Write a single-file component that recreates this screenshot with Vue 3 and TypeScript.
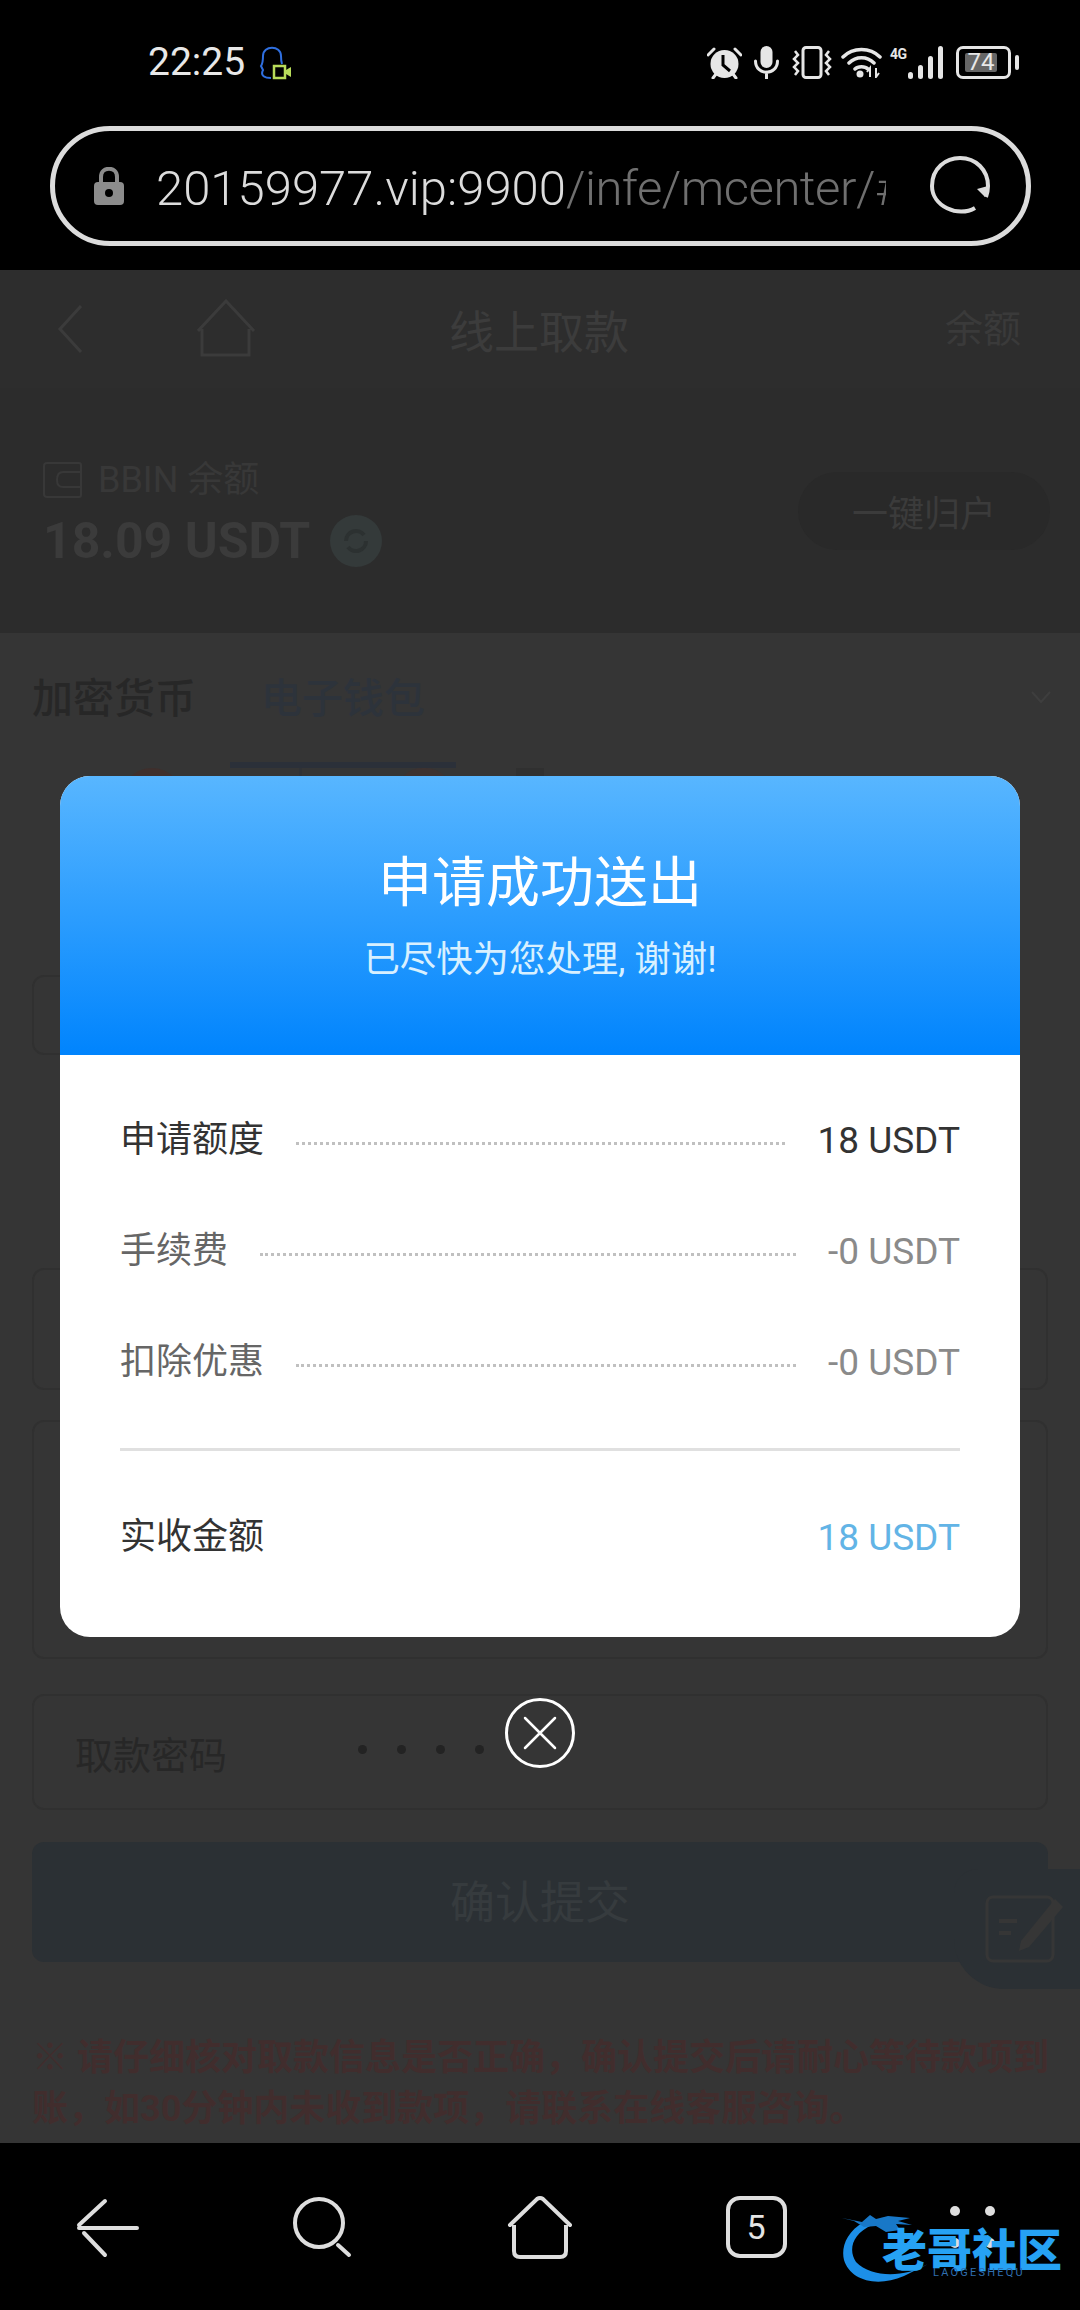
<script setup lang="ts">
interface Row {
  label: string
  value: string
  tone: string
}

const rows: Row[] = [
  { label: '申请额度', value: '18 USDT', tone: 'dark' },
  { label: '手续费', value: '-0 USDT', tone: 'grey' },
  { label: '扣除优惠', value: '-0 USDT', tone: 'grey' }
]
</script>

<template>
  <div class="phone">
    <header class="chrome">
      <div class="status">
        <span class="time">22:25</span>
        <svg class="qq" width="34" height="34" viewBox="0 0 34 34">
          <path d="M12 32 C6 32 1 30 4 24 L2 20 C4 17 4 13 4 10 C4 -1 22 -1 22 10 C22 13 22 15 23 18" fill="none" stroke="#2f6fe0" stroke-width="2" />
          <rect x="15" y="20" width="11" height="12" fill="none" stroke="#b8dc5a" stroke-width="2.500" />
          <path d="M27 24 L32 21 V31 L27 28 Z" fill="#b8dc5a" />
        </svg>
        <div class="status-icons">
          <svg class="ic" width="35" height="33" viewBox="0 0 35 33">
            <circle cx="17.500" cy="18" r="14" fill="#e6e6e6" />
            <path d="M16 9 V19 L23 25" fill="none" stroke="#000" stroke-width="3" />
            <path d="M1 9 L7 3 M34 9 L28 3 M6 32 L9 28 M29 32 L26 28" stroke="#e6e6e6" stroke-width="3" stroke-linecap="round" />
          </svg>
          <svg class="ic ic-mic" width="25" height="33" viewBox="0 0 25 33">
            <rect x="6.500" y="0" width="12" height="22" rx="6" fill="#e6e6e6" />
            <path d="M1.500 15 C1.500 30 23.500 30 23.500 15 M12.500 26 V33" fill="none" stroke="#e6e6e6" stroke-width="3" stroke-linecap="round" />
          </svg>
          <svg class="ic ic-vib" width="40" height="33" viewBox="0 0 40 33">
            <rect x="11" y="1.500" width="18" height="30" rx="3" fill="none" stroke="#e6e6e6" stroke-width="3" />
            <path d="M3 5 L6 9 L2 13 L6 17 L2 21 L6 25 L3 29 M37 5 L34 9 L38 13 L34 17 L38 21 L34 25 L37 29" fill="none" stroke="#e6e6e6" stroke-width="2.500" />
          </svg>
          <svg class="ic ic-wifi" width="41" height="31" viewBox="0 0 41 31">
            <path d="M2 10 C12 0 29 0 39 10 M8 16 C15 9 26 9 33 16 M14 22 C17 19 24 19 27 22" fill="none" stroke="#e6e6e6" stroke-width="3.500" stroke-linecap="round" />
            <circle cx="19" cy="27" r="3.500" fill="#e6e6e6" />
            <path d="M29 30 V21 L26 25 M35 21 V30 L38 26" fill="none" stroke="#e6e6e6" stroke-width="2" />
          </svg>
          <div class="signal ic-sig">
            <span class="net">4G</span>
            <svg width="35" height="33" viewBox="0 0 35 33">
              <rect x="0" y="26" width="5" height="7" rx="2.500" fill="#e6e6e6" />
              <rect x="10" y="19" width="5" height="14" rx="2.500" fill="#e6e6e6" />
              <rect x="20" y="10" width="5" height="23" rx="2.500" fill="#e6e6e6" />
              <rect x="30" y="0" width="5" height="33" rx="2.500" fill="#e6e6e6" />
            </svg>
          </div>
          <div class="battery ic-batt">
            <div class="battery-body"><span class="battery-level">74</span></div>
            <span class="battery-nub"></span>
          </div>
        </div>
      </div>
      <div class="address">
        <svg width="32" height="38" viewBox="0 0 32 38">
          <path d="M8 16 V10 C8 -1 24 -1 24 10 V16" fill="none" stroke="#8c8c8c" stroke-width="4" />
          <rect x="1" y="15" width="30" height="23" rx="4" fill="#8c8c8c" />
          <circle cx="16" cy="26" r="4" fill="#000" />
        </svg>
        <div class="url"><span class="host">20159977.vip:9900</span><span class="path">/infe/mcenter/#/withdraw</span></div>
        <svg class="reload" width="60" height="60" viewBox="0 0 60 60">
          <path d="M45 52 C28 62 2 50 2 30 C2 12 16 2 30 2 C46 2 58 14 58 30 C58 34 57 38 56 41" fill="none" stroke="#dcdcdc" stroke-width="4" />
          <path d="M47 33 L55 41 L58 30 Z" fill="#dcdcdc" />
        </svg>
      </div>
    </header>

    <main class="web">
      <div class="top-bar">
        <div class="top-left">
          <svg width="26" height="50" viewBox="0 0 26 50">
            <path d="M24 2 L3 25 L24 48" fill="none" stroke="#3b3b3b" stroke-width="3" />
          </svg>
          <svg class="top-home" width="60" height="60" viewBox="0 0 60 60">
            <path d="M1 32 L29 2 L57 32 M5 30 V56 H52 V30" fill="none" stroke="#3b3b3b" stroke-width="3" />
          </svg>
        </div>
        <div class="top-title">线上取款</div>
        <div class="top-right">余额</div>
      </div>

      <section class="balance">
        <div class="balance-info">
          <div class="balance-label">
            <svg width="40" height="36" viewBox="0 0 40 36">
              <path d="M38 9 V3 Q38 1 36 1 H4 Q1 1 1 4 V32 Q1 35 4 35 H36 Q38 35 38 33 V26 M38 10 H20 Q14 10 14 18 Q14 25 20 25 H38 Z" fill="none" stroke="#383838" stroke-width="2" />
            </svg>
            <span>BBIN 余额</span>
          </div>
          <div class="balance-amount">
            <span>18.09 USDT</span>
            <span class="coin">
              <svg width="30" height="30" viewBox="0 0 30 30">
                <path d="M5 15 A10 10 0 0 1 23 9 M25 15 A10 10 0 0 1 7 21" fill="none" stroke="#2c3131" stroke-width="4" />
              </svg>
            </span>
          </div>
        </div>
        <div class="collect">一键归户</div>
      </section>

      <section class="form">
        <div class="tabs">
          <div class="tab">加密货币</div>
          <div class="tab tab-active">电子钱包</div>
          <svg class="tab-more" width="22" height="14" viewBox="0 0 22 14">
            <path d="M2 2 L11 12 L20 2" fill="none" stroke="#3e3e3e" stroke-width="2" />
          </svg>
        </div>
        <div class="wallets">
          <span class="wallet wallet-a"></span>
          <span class="wallet wallet-b"></span>
          <span class="wallet wallet-c"></span>
          <span class="wallet wallet-d"></span>
        </div>
        <div class="field field-a"></div>
        <div class="field field-b"></div>
        <div class="field field-c"></div>
        <div class="field field-pass">
          <span class="field-label">取款密码</span>
          <span class="dots"><i></i><i></i><i></i><i></i></span>
        </div>
        <div class="submit">确认提交</div>
        <p class="note">※ 请仔细核对取款信息是否正确，确认提交后请耐心等待款项到账，如30分钟内未收到款项，请联系在线客服咨询。</p>
      </section>

      <div class="float-btn">
        <svg width="80" height="68" viewBox="0 0 80 68">
          <rect x="2" y="2" width="66" height="64" rx="6" fill="none" stroke="#363636" stroke-width="3" />
          <path d="M14 26 H32 M14 38 H26" stroke="#363636" stroke-width="4" />
          <path d="M70 4 L78 12 L44 52 L34 56 L36 46 Z" fill="#363636" />
        </svg>
      </div>

      <div class="overlay">
        <div class="dialog">
          <div class="dialog-head">
            <h1 class="dialog-title">申请成功送出</h1>
            <p class="dialog-sub">已尽快为您处理, 谢谢!</p>
          </div>
          <div class="dialog-body">
            <div v-for="row in rows" :key="row.label" class="row" :class="`row-${row.tone}`">
              <span class="row-label">{{ row.label }}</span>
              <span class="row-dots"></span>
              <span class="row-value">{{ row.value }}</span>
            </div>
            <div class="divider"></div>
            <div class="row row-total">
              <span class="row-label">实收金额</span>
              <span class="row-value">18 USDT</span>
            </div>
          </div>
        </div>
        <button class="close" type="button" aria-label="关闭">
          <svg width="36" height="36" viewBox="0 0 36 36">
            <path d="M3 3 L33 33 M33 3 L3 33" stroke="#fff" stroke-width="2.500" stroke-linecap="round" />
          </svg>
        </button>
      </div>
    </main>

    <nav class="nav">
      <div class="nav-cell">
        <svg width="80" height="80" viewBox="0 0 80 80">
          <path d="M11 41 H69 M11 38 L37 14 M16 46 L37 68" fill="none" stroke="#dedede" stroke-width="4" stroke-linecap="round" />
        </svg>
      </div>
      <div class="nav-cell">
        <svg width="80" height="80" viewBox="0 0 80 80">
          <circle cx="35" cy="36" r="24" fill="none" stroke="#dedede" stroke-width="4" />
          <path d="M54 58 L65 68" stroke="#dedede" stroke-width="4" stroke-linecap="round" />
        </svg>
      </div>
      <div class="nav-cell">
        <svg width="80" height="80" viewBox="0 0 80 80">
          <path d="M10 38 L37 12 Q40 10 43 12 L70 38" fill="none" stroke="#dedede" stroke-width="4" stroke-linecap="round" />
          <path d="M14 38 V64 Q14 70 20 70 H60 Q66 70 66 64 V38" fill="none" stroke="#dedede" stroke-width="4" />
        </svg>
      </div>
      <div class="nav-cell">
        <div class="tab-count">5</div>
      </div>
      <div class="nav-cell">
        <div class="more"><i></i><i></i><i></i><i></i></div>
      </div>
    </nav>

    <div class="watermark">
      <svg class="dragon" width="100" height="76" viewBox="0 0 100 76">
        <path d="M22 12 C4 22 -1 38 2 50 C8 70 34 78 62 66 L86 54 C62 68 30 68 14 52 C6 40 10 24 30 15 Z" fill="#1c8fe8" />
        <path d="M0 8 L20 12 L28 5 L34 9 L46 6 L68 8 L56 11 L70 15 L54 14 L58 20 L44 22 L34 16 L22 17 L12 11 Z" fill="#1878c8" />
      </svg>
      <div class="mark-name">老哥社区</div>
      <div class="mark-sub">LAOGESHEQU</div>
    </div>
  </div>
</template>

<style scoped>
.phone {
  position: relative;
  width: 1080px;
  height: 2310px;
  display: flex;
  flex-direction: column;
  overflow: hidden;
  background: #000;
  font-family: Roboto, "Noto Sans CJK SC", sans-serif;
}

.chrome {
  height: 270px;
  flex: none;
}

.status {
  height: 126px;
  display: flex;
  align-items: center;
  padding: 0 61px 2px 148px;
  box-sizing: border-box;
  color: #e8e8e8;
}

.time {
  font-size: 39px;
}

.qq {
  margin-left: 14px;
  margin-top: 2px;
}

.status-icons {
  margin-left: auto;
  display: flex;
  align-items: center;
}

.ic {
  display: block;
}

.ic-mic { margin-left: 12px; }
.ic-vib { margin-left: 13px; }
.ic-wifi { margin-left: 9px; }
.ic-sig { margin-left: 8px; }
.ic-batt { margin-left: 13px; }

.signal {
  display: flex;
  align-items: flex-start;
  width: 53px;
  height: 33px;
}

.net {
  width: 18px;
  font-size: 14px;
  line-height: 16px;
  font-weight: 700;
  letter-spacing: -0.5px;
  color: #e6e6e6;
}

.battery {
  display: flex;
  align-items: center;
}

.battery-body {
  width: 55px;
  height: 33px;
  box-sizing: border-box;
  border: 3px solid #e6e6e6;
  border-radius: 7px;
  padding: 4px 11px 4px 6px;
}

.battery-level {
  display: block;
  height: 100%;
  background: #666;
  border-radius: 2px;
  color: #e8e8e8;
  font-size: 24px;
  line-height: 19px;
  text-align: center;
}

.battery-nub {
  width: 4px;
  height: 15px;
  margin-left: 4px;
  border-radius: 2px;
  background: #e6e6e6;
}

.address {
  width: 981px;
  height: 120px;
  margin-left: 50px;
  box-sizing: border-box;
  border: 5px solid #dcdcdc;
  border-radius: 60px;
  display: flex;
  align-items: center;
  padding-left: 38px;
}

.url {
  width: 730px;
  margin: 5px 0 0 31px;
  overflow: hidden;
  white-space: nowrap;
  font-size: 49px;
  font-weight: 300;
  line-height: 62px;
}

.host {
  color: #dcdcdc;
}

.path {
  color: #6f6f6f;
  letter-spacing: -0.500px;
}

.reload {
  margin-left: 44px;
}

.web {
  position: relative;
  flex: 1;
  min-height: 0;
  overflow: hidden;
  background: #353535;
}

.top-bar {
  height: 118px;
  display: grid;
  grid-template-columns: 1fr auto 1fr;
  align-items: center;
  padding: 0 59px 0 57px;
  background: #2d2d2d;
  box-sizing: border-box;
}

.top-left {
  display: flex;
  align-items: center;
}

.top-home {
  margin-left: 114px;
}

.top-title {
  font-size: 45px;
  color: #3c3c3c;
}

.top-right {
  justify-self: end;
  margin-top: -8px;
  font-size: 38px;
  color: #3a3a3a;
}

.balance {
  height: 245px;
  display: flex;
  align-items: center;
  justify-content: space-between;
  padding: 0 30px 0 43px;
  background: #2c2c2c;
  box-sizing: border-box;
}

.balance-info {
  margin-top: 6px;
}

.balance-label {
  display: flex;
  align-items: center;
  gap: 15px;
  font-size: 36px;
  line-height: 44px;
  color: #383838;
}

.balance-amount {
  display: flex;
  align-items: center;
  gap: 20px;
  margin-top: 10px;
  font-size: 50px;
  font-weight: 700;
  color: #3b3b3b;
}

.coin {
  width: 52px;
  height: 52px;
  border-radius: 50%;
  background: #343a3a;
  display: flex;
  align-items: center;
  justify-content: center;
}

.collect {
  width: 252px;
  height: 78px;
  border-radius: 39px;
  background: #292929;
  display: flex;
  align-items: center;
  justify-content: center;
  font-size: 36px;
  color: #3b3b3b;
}

.form {
  padding: 0 32px;
}

.tabs {
  position: relative;
  height: 135px;
  display: flex;
}

.tab {
  padding-top: 42px;
  height: 135px;
  box-sizing: border-box;
  font-size: 41px;
  line-height: 48px;
  font-weight: 500;
  color: #272727;
}

.tab-active {
  margin-left: 34px;
  padding: 42px 31px 0;
  border-bottom: 6px solid #2b3039;
  color: #2d333b;
}

.tab-more {
  margin: 57px -4px 0 auto;
}

.wallets {
  height: 207px;
  display: flex;
  align-items: flex-start;
}

.wallet {
  display: block;
}

.wallet-a {
  width: 64px;
  height: 64px;
  margin-left: 88px;
  border-radius: 50%;
  background: #3f2f2c;
}

.wallet-b {
  width: 3px;
  height: 30px;
  margin-left: 115px;
  background: #303236;
}

.wallet-c {
  width: 56px;
  height: 50px;
  margin-left: 94px;
  border-radius: 26px 26px 0 0;
  background: #3d3230;
}

.wallet-d {
  width: 28px;
  height: 40px;
  margin-left: 64px;
  background: #303030;
}

.field {
  box-sizing: border-box;
  border: 2px solid #303030;
  border-radius: 12px;
}

.field-a { height: 80px; width: 400px; }
.field-b { height: 122px; margin-top: 213px; }
.field-c { height: 239px; margin-top: 30px; }

.field-pass {
  height: 116px;
  margin-top: 35px;
  display: flex;
  align-items: center;
  padding-left: 41px;
  font-size: 38px;
  color: #272727;
}

.field-label {
  width: 283px;
}

.dots {
  display: flex;
  gap: 30px;
  margin-top: -6px;
}

.dots i {
  width: 9px;
  height: 9px;
  border-radius: 50%;
  background: #232323;
}

.submit {
  height: 120px;
  margin-top: 32px;
  padding-bottom: 6px;
  box-sizing: border-box;
  border-radius: 12px;
  background: #2b3034;
  display: flex;
  align-items: center;
  justify-content: center;
  font-size: 45px;
  color: #363b3e;
}

.note {
  margin: 71px -6px 0 0;
  font-size: 36px;
  line-height: 51px;
  font-weight: 700;
  color: #412d2d;
}

.float-btn {
  position: absolute;
  right: 0;
  top: 1599px;
  width: 126px;
  height: 120px;
  box-sizing: border-box;
  padding: 26px 0 0 31px;
  border-radius: 24px 0 0 50px;
  background: #2b3034;
}

.float-btn svg {
  display: block;
}

.overlay {
  position: absolute;
  inset: 0;
  display: flex;
  flex-direction: column;
  align-items: center;
  padding-top: 506px;
  box-sizing: border-box;
}

.dialog {
  width: 960px;
  height: 861px;
  border-radius: 30px;
  overflow: hidden;
  background: #fff;
}

.dialog-head {
  height: 279px;
  box-sizing: border-box;
  padding-top: 76px;
  text-align: center;
  background: linear-gradient(180deg, #58b6ff 0%, #0084fd 100%);
}

.dialog-title {
  margin: 0;
  font-size: 54px;
  line-height: 64px;
  font-weight: 400;
  color: #fff;
}

.dialog-sub {
  margin: 21px 0 0;
  font-size: 36.400px;
  line-height: 46px;
  color: #d8f0ff;
}

.dialog-body {
  padding: 29px 60px 0;
}

.row {
  height: 111px;
  display: flex;
  align-items: center;
}

.row-label {
  font-size: 36px;
  line-height: 50px;
}

.row-value {
  margin-top: 2px;
  font-size: 37px;
  line-height: 50px;
}

.row-dots {
  flex: 1;
  height: 0;
  margin: 7px 32px 0;
  border-top: 3px dotted #c0c0c0;
}

.row-dark .row-label,
.row-dark .row-value {
  color: #333;
}

.row-grey .row-label {
  color: #666;
}

.row-grey .row-value {
  color: #8a8a8a;
}

.divider {
  height: 3px;
  margin-top: 31px;
  background: #e0e0e0;
}

.row-total {
  margin-top: 30px;
  justify-content: space-between;
  color: #333;
}

.row-total .row-value {
  color: #62b4e6;
}

.close {
  width: 70px;
  height: 70px;
  margin-top: 61px;
  padding: 0;
  border: 3px solid #fff;
  border-radius: 50%;
  background: transparent;
  display: flex;
  align-items: center;
  justify-content: center;
}

.nav {
  height: 167px;
  flex: none;
  display: grid;
  grid-template-columns: repeat(5, 216px);
  background: #000;
}

.nav-cell {
  display: flex;
  align-items: center;
  justify-content: center;
}

.tab-count {
  width: 61px;
  height: 62px;
  box-sizing: border-box;
  border: 4px solid #dedede;
  border-radius: 14px;
  display: flex;
  align-items: center;
  justify-content: center;
  font-size: 34px;
  color: #e4e4e4;
}

.more {
  display: grid;
  grid-template-columns: 10px 10px;
  gap: 22px 25px;
}

.more i {
  width: 10px;
  height: 10px;
  border-radius: 50%;
  background: #dedede;
}

.watermark {
  position: absolute;
  left: 842px;
  top: 2210px;
  width: 226px;
  height: 78px;
}

.dragon {
  position: absolute;
  left: 0;
  top: 0;
}

.mark-name {
  position: absolute;
  left: 40px;
  top: 23px;
  width: 184px;
  font-size: 45px;
  line-height: 38px;
  font-weight: 900;
  white-space: nowrap;
  color: #26a2f4;
}

.mark-sub {
  position: absolute;
  left: 91px;
  top: 56px;
  font-size: 11px;
  line-height: 14px;
  letter-spacing: 2.200px;
  white-space: nowrap;
  color: #2f6fb0;
}
</style>
